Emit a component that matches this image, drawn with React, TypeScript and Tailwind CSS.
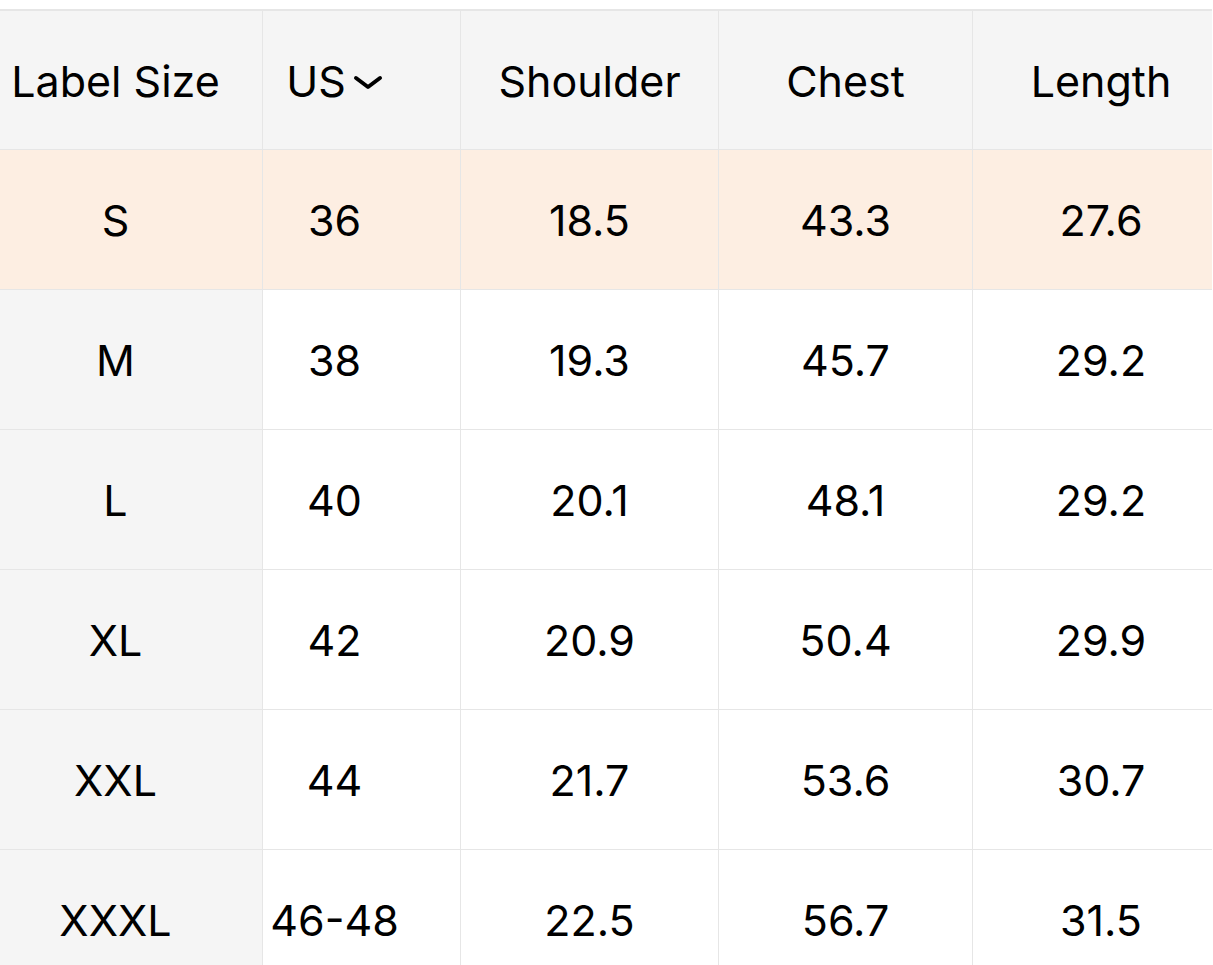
const columns = ["Label Size", "US", "Shoulder", "Chest", "Length"];

const rows = [
  ["S", "36", "18.5", "43.3", "27.6"],
  ["M", "38", "19.3", "45.7", "29.2"],
  ["L", "40", "20.1", "48.1", "29.2"],
  ["XL", "42", "20.9", "50.4", "29.9"],
  ["XXL", "44", "21.7", "53.6", "30.7"],
  ["XXXL", "46-48", "22.5", "56.7", "31.5"],
];

// per-column padding so the text centres line up with the screenshot
const pads = ["pr-[31px]", "pr-[54px]", "", "", "pl-[17px] border-r-0"];

const Chevron = () => (
  <svg width="30" height="15" viewBox="0 0 30 15" className="block shrink-0 ml-[7px] mt-[2px]">
    <path
      d="M3 3 L15 12 L27 3"
      fill="none"
      stroke="#000"
      strokeWidth="4"
      strokeLinecap="round"
      strokeLinejoin="round"
    />
  </svg>
);

const App = () => {
  return (
    <div className="min-h-screen bg-white overflow-hidden font-['Inter',sans-serif] text-black">
      <div className="mt-[9px] w-[1212px] border-t-2 border-[#e6e6e6] grid grid-cols-[263px_198px_258px_254px_239px]">
        {columns.map((c, i) => (
          <div
            key={c}
            className={`h-[139px] pt-[3px] flex items-center justify-center bg-[#f5f5f5] border-r border-b border-[#e6e6e6] text-[43px] leading-none ${pads[i]}`}
          >
            <span>{c}</span>
            {c === "US" && <Chevron />}
          </div>
        ))}
        {rows.map((r, ri) =>
          r.map((v, ci) => (
            <div
              key={ri + "-" + ci}
              className={`h-[140px] pt-[2px] flex items-center justify-center border-r border-b border-[#e6e6e6] text-[43px] leading-none ${pads[ci]} ${
                ri === 0 ? "bg-[#fdeee2]" : ci === 0 ? "bg-[#f5f5f5]" : "bg-white"
              }`}
            >
              {v}
            </div>
          ))
        )}
      </div>
    </div>
  );
};

export default App;
